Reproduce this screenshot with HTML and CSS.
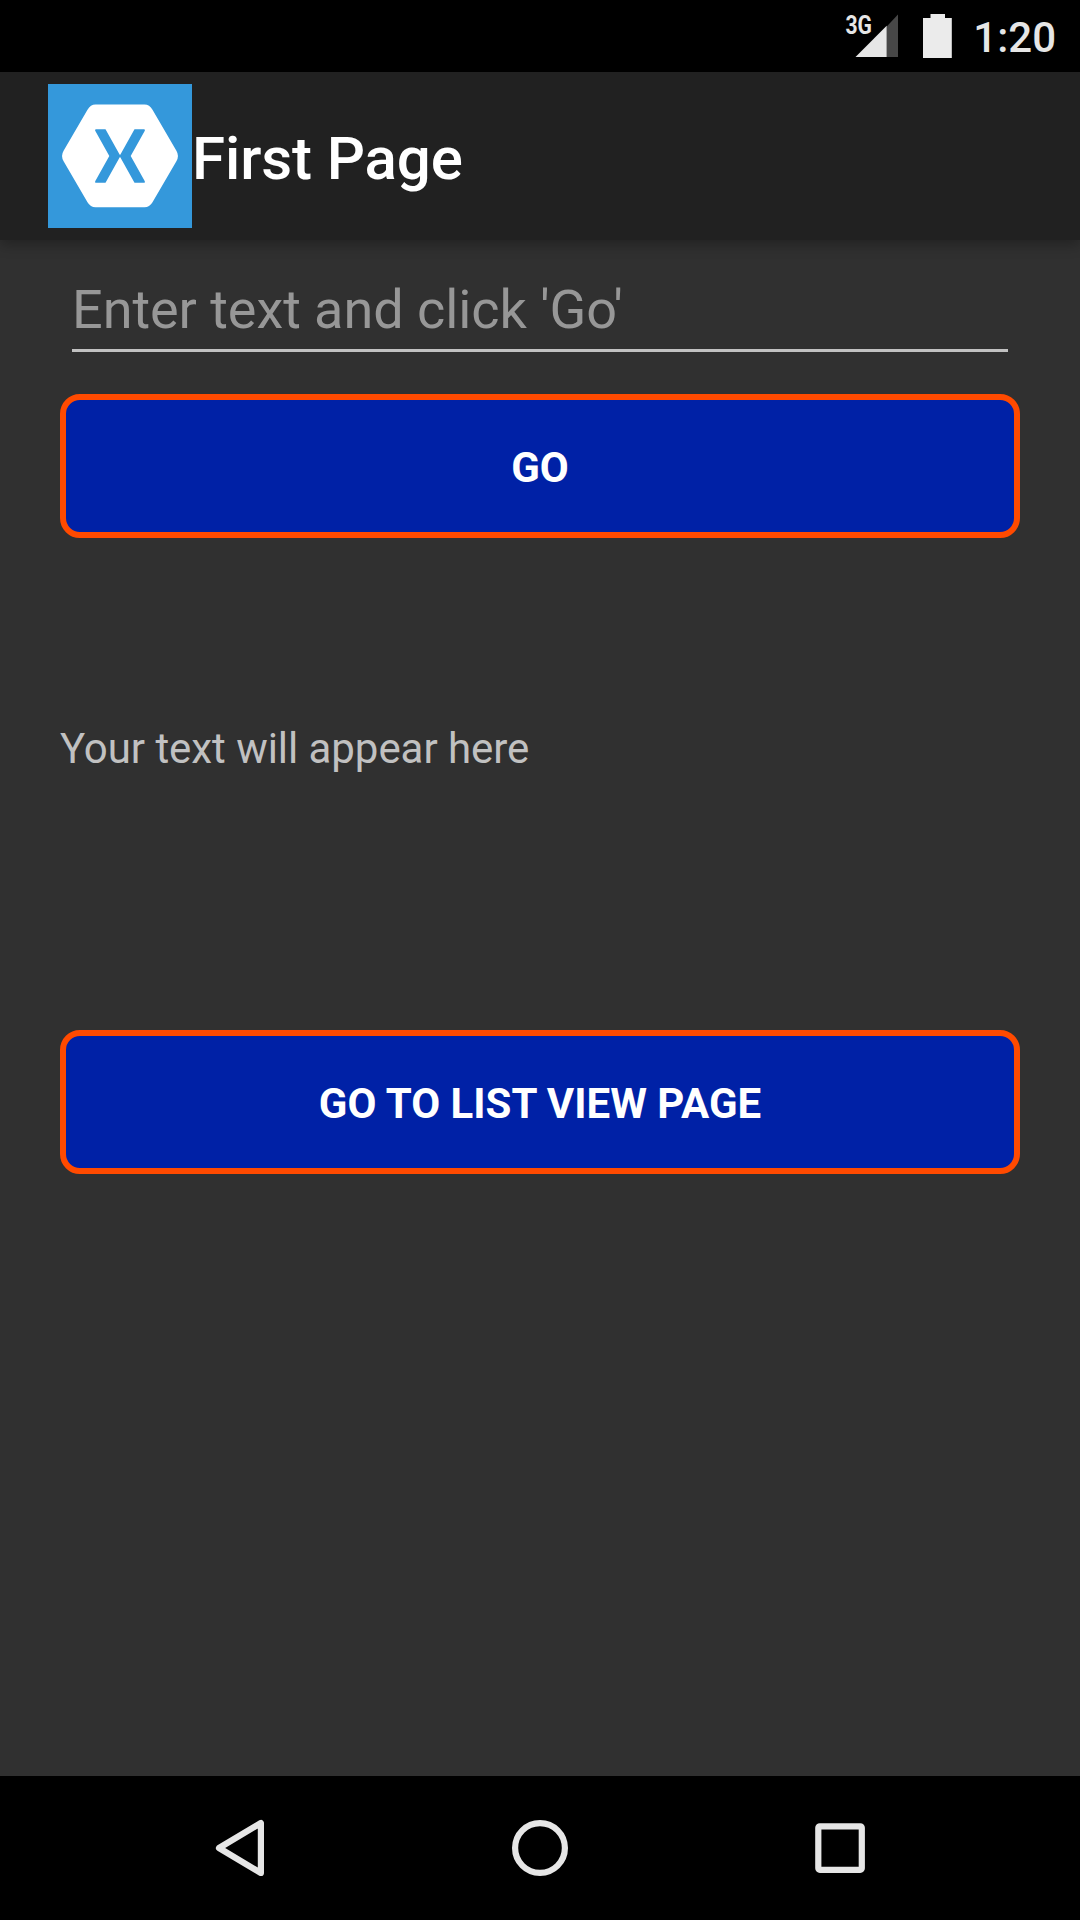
FILE: index.html
```html
<!DOCTYPE html>
<html lang="en">
<head>
<meta charset="utf-8">
<title>First Page</title>
<link rel="stylesheet" href="styles.css">
</head>
<body>
<div class="screen">
  <div class="status-bar">
    <svg class="signal" width="60" height="72" viewBox="0 0 60 72">
      <path class="signal-empty" d="M46.7 26.5L58 14.5V57H46.7z"/>
      <path class="signal-fill" d="M15.5 57L46.7 25.7V57z"/>
      <text class="network" x="5.5" y="33.5" textLength="26.5" lengthAdjust="spacingAndGlyphs">3G</text>
    </svg>
    <svg class="battery" width="29" height="72" viewBox="0 0 29 72">
      <path d="M0 18H7.5V14H22V18H28.8V58H0z"/>
    </svg>
    <span class="clock">1:20</span>
  </div>
  <header class="app-bar">
    <svg class="logo" width="144" height="144" viewBox="0 0 144 144">
      <path class="logo-hex" d="M47.5 20.5H96.5Q101.500 20.500 104.500 25.700L128.400 66.700Q131.500 71.900 128.400 77.200L104.500 118.200Q101.500 123.300 96.500 123.300H47.500Q42.500 123.300 39.500 118.200L15.600 77.200Q12.500 71.900 15.600 66.700L39.500 25.700Q42.500 20.500 47.500 20.500z"/>
      <path class="logo-x" d="M48 45.300H57.500L72 71.200L86.500 45.300H96Q97.500 45.300 96.800 46.800L82.700 72L96.800 97.200Q97.500 98.700 96 98.700H86.500L72 72.800L57.500 98.700H48Q46.500 98.700 47.200 97.200L61.300 72L47.200 46.800Q46.500 45.300 48 45.300z"/>
      <circle class="logo-x" cx="72" cy="72" r="1.300"/>
    </svg>
    <h1 class="title">First Page</h1>
  </header>
  <main class="content">
    <input class="entry" type="text" placeholder="Enter text and click 'Go'">
    <button class="button" type="button">GO</button>
    <p class="message">Your text will appear here</p>
    <button class="button" type="button">GO TO LIST VIEW PAGE</button>
  </main>
  <nav class="nav-bar">
    <svg width="60" height="60" viewBox="0 0 60 60"><path d="M50.900 5V55L9 30z"/></svg>
    <svg width="60" height="60" viewBox="0 0 60 60"><circle cx="30" cy="30" r="24.900"/></svg>
    <svg width="60" height="60" viewBox="0 0 60 60"><rect x="8.300" y="8.300" width="43.500" height="43.500" rx="1.500"/></svg>
  </nav>
</div>
</body>
</html>
```
FILE: styles.css
```css
* {
  box-sizing: border-box;
}

body {
  margin: 0;
  background: #000;
  font-family: Roboto, sans-serif;
}

.screen {
  display: flex;
  flex-direction: column;
  width: 1080px;
  height: 1920px;
  overflow: hidden;
  background: #303030;
}

.status-bar {
  display: flex;
  justify-content: flex-end;
  flex: none;
  height: 72px;
  padding-right: 24px;
  background: #000;
}

.signal {
  margin-right: 23px;
}

.signal-empty {
  fill: #474747;
}

.signal-fill {
  fill: #e6e6e6;
}

.network {
  font-family: Roboto, sans-serif;
  font-size: 25px;
  font-weight: 700;
  fill: #e6e6e6;
}

.battery {
  margin-right: 21px;
  fill: #ebebeb;
}

.clock {
  padding-top: 2px;
  font-size: 42px;
  font-weight: 500;
  line-height: 72px;
  color: #e6e6e6;
}

.app-bar {
  position: relative;
  display: flex;
  align-items: center;
  flex: none;
  height: 168px;
  padding-left: 48px;
  background: #212121;
  box-shadow: 0 5px 12px rgba(0, 0, 0, 0.28);
}

.logo {
  background: #3498db;
}

.logo-hex {
  fill: #fff;
}

.logo-x {
  fill: #3498db;
}

.title {
  margin: 0;
  padding-top: 5px;
  font-size: 60px;
  font-weight: 500;
  letter-spacing: -0.1px;
  line-height: 72px;
  color: #fff;
}

.content {
  display: flex;
  flex-direction: column;
  flex: 1;
  padding: 30px 60px 0;
}

.entry {
  height: 82px;
  margin: 0 12px 42px;
  padding: 0 0 1px;
  border: 0;
  border-bottom: 3px solid #c1c1c1;
  border-radius: 0;
  outline: 0;
  background: transparent;
  color: #fff;
  font-family: inherit;
  font-size: 54px;
  letter-spacing: -0.05px;
}

.entry::placeholder {
  color: #979797;
  opacity: 1;
}

.button {
  height: 144px;
  padding: 3px 0 0;
  border: 6px solid #ff4a00;
  border-radius: 20px;
  background: #0021a6;
  color: #fff;
  font-family: inherit;
  font-size: 42px;
  font-weight: 700;
}

.message {
  margin: 0;
  padding: 186px 0 256px;
  font-size: 42px;
  letter-spacing: -0.05px;
  line-height: 50px;
  color: #c1c1c1;
}

.nav-bar {
  display: flex;
  align-items: center;
  justify-content: center;
  gap: 240px;
  flex: none;
  height: 144px;
  background: #000;
  fill: none;
  stroke: #e6e6e6;
  stroke-width: 6.200;
  stroke-linejoin: round;
}
```
